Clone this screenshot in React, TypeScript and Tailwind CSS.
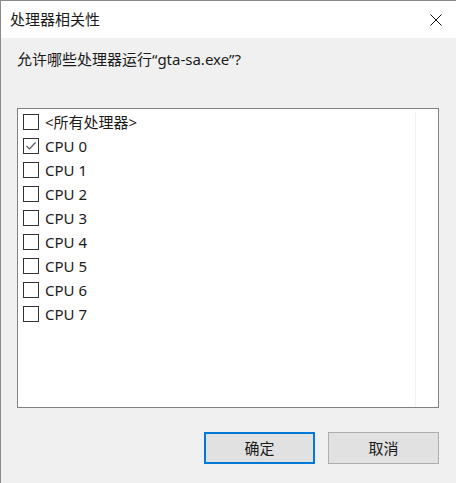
import React from "react";

const font = { fontFamily: '"Noto Sans", "Noto Sans CJK SC", sans-serif' };

const items = [
  { label: "<所有处理器>", checked: false },
  { label: "CPU 0", checked: true },
  { label: "CPU 1", checked: false },
  { label: "CPU 2", checked: false },
  { label: "CPU 3", checked: false },
  { label: "CPU 4", checked: false },
  { label: "CPU 5", checked: false },
  { label: "CPU 6", checked: false },
  { label: "CPU 7", checked: false },
];

const Box = ({ checked }: { checked: boolean }) => (
  <div className="w-[16px] h-[16px] border border-[#333333] bg-white flex items-center justify-center">
    {checked && (
      <svg width="12" height="12" viewBox="0 0 12 12">
        <polyline points="1.5,6 4.5,9 10.5,2.5" fill="none" stroke="#555" strokeWidth="1.2" />
      </svg>
    )}
  </div>
);

const App = () => {
  return (
    <div className="w-[456px] h-[483px] bg-[#f0f0f0] border-l border-t border-[#8a8a8a] flex flex-col text-[#1a1a1a]" style={font}>
      {/* Title bar */}
      <div className="h-[37px] bg-white flex items-center justify-between pl-[9px] pr-[14px]">
        <span className="text-[15px]">处理器相关性</span>
        <svg width="12" height="12" viewBox="0 0 12 12">
          <path d="M0.5 0.5 L11.5 11.5 M11.5 0.5 L0.5 11.5" stroke="#111" strokeWidth="1" />
        </svg>
      </div>

      <div className="flex flex-col pl-[16px]">
        <div className="mt-[11px] text-[15px] leading-[20px]">允许哪些处理器运行“gta-sa.exe”?</div>

        {/* List box */}
        <div className="mt-[39px] h-[300px] w-[422px] border border-[#828282] bg-white flex">
          <div className="flex-1 flex flex-col pt-[1px] pl-[5px]">
            {items.map((it) => (
              <div key={it.label} className="h-[24px] flex items-center gap-[6px]">
                <Box checked={it.checked} />
                <span className="text-[15px] leading-[20px]">{it.label}</span>
              </div>
            ))}
          </div>
          <div className="w-px bg-[#f2f2f2] mr-[22px] mt-[3px]" />
        </div>

        {/* Buttons */}
        <div className="mt-[24px] w-[422px] flex justify-end gap-[13px]">
          <button className="w-[111px] h-[32px] bg-[#e1e1e1] border-2 border-[#0078d7] text-[15px]">确定</button>
          <button className="w-[111px] h-[32px] bg-[#e1e1e1] border border-[#adadad] text-[15px]">取消</button>
        </div>
      </div>
    </div>
  );
};

export default App;
